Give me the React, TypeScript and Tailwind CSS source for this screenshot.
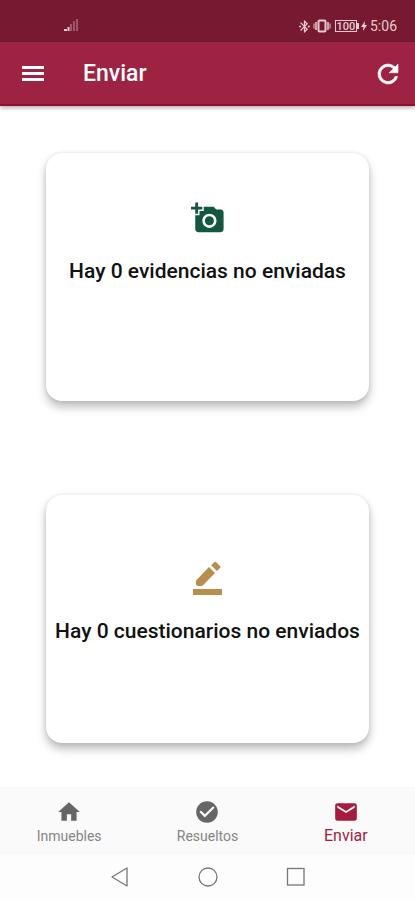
import type { ReactNode } from "react";
import { MdAddAPhoto, MdBluetoothConnected, MdCheckCircle, MdEmail, MdHome } from "react-icons/md";

const tabs = [
  { label: "Inmuebles", icon: MdHome, active: false },
  { label: "Resueltos", icon: MdCheckCircle, active: false },
  { label: "Enviar", icon: MdEmail, active: true },
];

function StatusBar() {
  return (
    <div className="h-[42px] bg-[#771a2f] pl-16 pr-[18px] pt-[10px] flex items-center justify-between text-[#e6cbd1]">
      <svg className="w-4 h-4" viewBox="0 0 16 16" fill="currentColor">
        <path d="M0 11h3v2H0zM3.5 9h2v4h-2z" />
        <path opacity="0.35" d="M6 6h2v7H6zM9 3h2v10H9zM12 1h2v12h-2z" />
      </svg>
      <div className="flex items-center">
        <MdBluetoothConnected className="w-[15px] h-[15px]" />
        <svg className="w-[18px] h-4 ml-px" viewBox="0 0 18 16" fill="none" stroke="currentColor">
          <rect x="5.5" y="2.5" width="7" height="11" rx="1" strokeWidth="2" />
          <path d="M3 4v8M15 4v8" strokeWidth="1.5" />
          <path d="M1 5.5v5M17 5.5v5" />
        </svg>
        <div className="ml-1 h-3 w-[22px] border border-current flex items-center justify-center text-[11px] leading-none font-medium">
          100
        </div>
        <div className="h-[6px] w-[2px] bg-current" />
        <svg className="w-[6px] h-[10px] ml-[2px]" viewBox="0 0 6 10" fill="currentColor">
          <path d="M4 0L0 6h2.4L2 10l4-6H3.6z" />
        </svg>
        <span className="ml-[3px] text-sm">5:06</span>
      </div>
    </div>
  );
}

function MenuIcon() {
  return (
    <svg className="w-[30px] h-[30px]" viewBox="0 0 30 30" fill="currentColor">
      <path d="M5 7h22v3H5zM5 13h22v3H5zM5 19h22v3H5z" />
    </svg>
  );
}

function RefreshIcon() {
  return (
    <svg
      className="w-[30px] h-[30px]"
      viewBox="0 0 24 24"
      fill="currentColor"
      stroke="currentColor"
      strokeWidth="0.5"
    >
      <path d="M17.65 6.35A7.96 7.96 0 0 0 12 4a8 8 0 1 0 7.73 10h-2.08A6 6 0 1 1 12 6c1.66 0 3.14.69 4.22 1.78L13 11h7V4z" />
    </svg>
  );
}

function Header() {
  return (
    <header className="relative h-16 bg-[#9e2241] border-b-2 border-[#920f33] px-[17px] pt-[2px] flex items-center text-white shadow-[0_2px_4px_rgba(0,0,0,0.3)]">
      <button type="button" aria-label="Menú">
        <MenuIcon />
      </button>
      <h1 className="ml-9 text-[23px] font-medium">Enviar</h1>
      <button type="button" aria-label="Actualizar" className="ml-auto -mr-[5px]">
        <RefreshIcon />
      </button>
    </header>
  );
}

function PencilIcon() {
  return (
    <svg className="w-9 h-9 text-[#b98d4b]" viewBox="0 0 36 36" fill="currentColor">
      <path d="M19 8l6 6-12 12.200q-.8.8-1.800.8H8.500Q6 27 6 24.500V22.500q0-1 .8-1.800z" />
      <path d="M21.200 6.200l3-3q1-1 2 0l3.800 3.800q1 1 0 2l-3 3z" />
      <path d="M3 30h29v6H3z" />
    </svg>
  );
}

function Card({ icon, text, className }: { icon: ReactNode; text: string; className: string }) {
  return (
    <section
      className={`h-[248px] rounded-2xl bg-white flex flex-col items-center text-center shadow-[0_6px_10px_rgba(0,0,0,0.26),0_0_4px_rgba(0,0,0,0.1)] ${className}`}
    >
      {icon}
      <p className="mt-[22px] text-[21px] leading-7 font-medium text-[#111111]">{text}</p>
    </section>
  );
}

function TabBar() {
  return (
    <nav className="h-[68px] bg-[#fafafa] flex">
      {tabs.map(({ label, icon: Icon, active }) => (
        <a
          key={label}
          href="#"
          className={`flex-1 flex flex-col items-center pt-3 ${active ? "text-[#a51c40]" : "text-[#666666]"}`}
        >
          <Icon className="w-[26px] h-[26px]" />
          <span className={active ? "text-base leading-[22px]" : "text-sm leading-[22px] text-[#858585]"}>{label}</span>
        </a>
      ))}
    </nav>
  );
}

function SystemNav() {
  return (
    <div className="h-[45px] pb-[2px] bg-[#fdfdfd] flex items-center justify-center gap-[68px] text-[#777777]">
      <button type="button" aria-label="Atrás">
        <svg className="w-5 h-5" viewBox="0 0 20 20" fill="none" stroke="currentColor" strokeWidth="1.3">
          <path d="M17 1L2 10l15 9z" strokeLinejoin="round" />
        </svg>
      </button>
      <button type="button" aria-label="Inicio">
        <svg className="w-5 h-5" viewBox="0 0 20 20" fill="none" stroke="currentColor" strokeWidth="1.3">
          <circle cx="10" cy="10" r="9" />
        </svg>
      </button>
      <button type="button" aria-label="Recientes">
        <svg className="w-5 h-5" viewBox="0 0 20 20" fill="none" stroke="currentColor" strokeWidth="1.3">
          <rect x="1.5" y="1.5" width="16.5" height="16.5" />
        </svg>
      </button>
    </div>
  );
}

export default function App() {
  return (
    <div className="min-h-screen flex flex-col bg-white font-[Roboto,sans-serif]">
      <StatusBar />
      <Header />
      <main className="flex-1 px-[46px] pt-[47px] pb-11 flex flex-col gap-[94px]">
        <Card
          className="pt-12"
          icon={<MdAddAPhoto className="w-[34px] h-[34px] text-[#12573f]" />}
          text="Hay 0 evidencias no enviadas"
        />
        <Card className="pt-16" icon={<PencilIcon />} text="Hay 0 cuestionarios no enviados" />
      </main>
      <TabBar />
      <SystemNav />
    </div>
  );
}
